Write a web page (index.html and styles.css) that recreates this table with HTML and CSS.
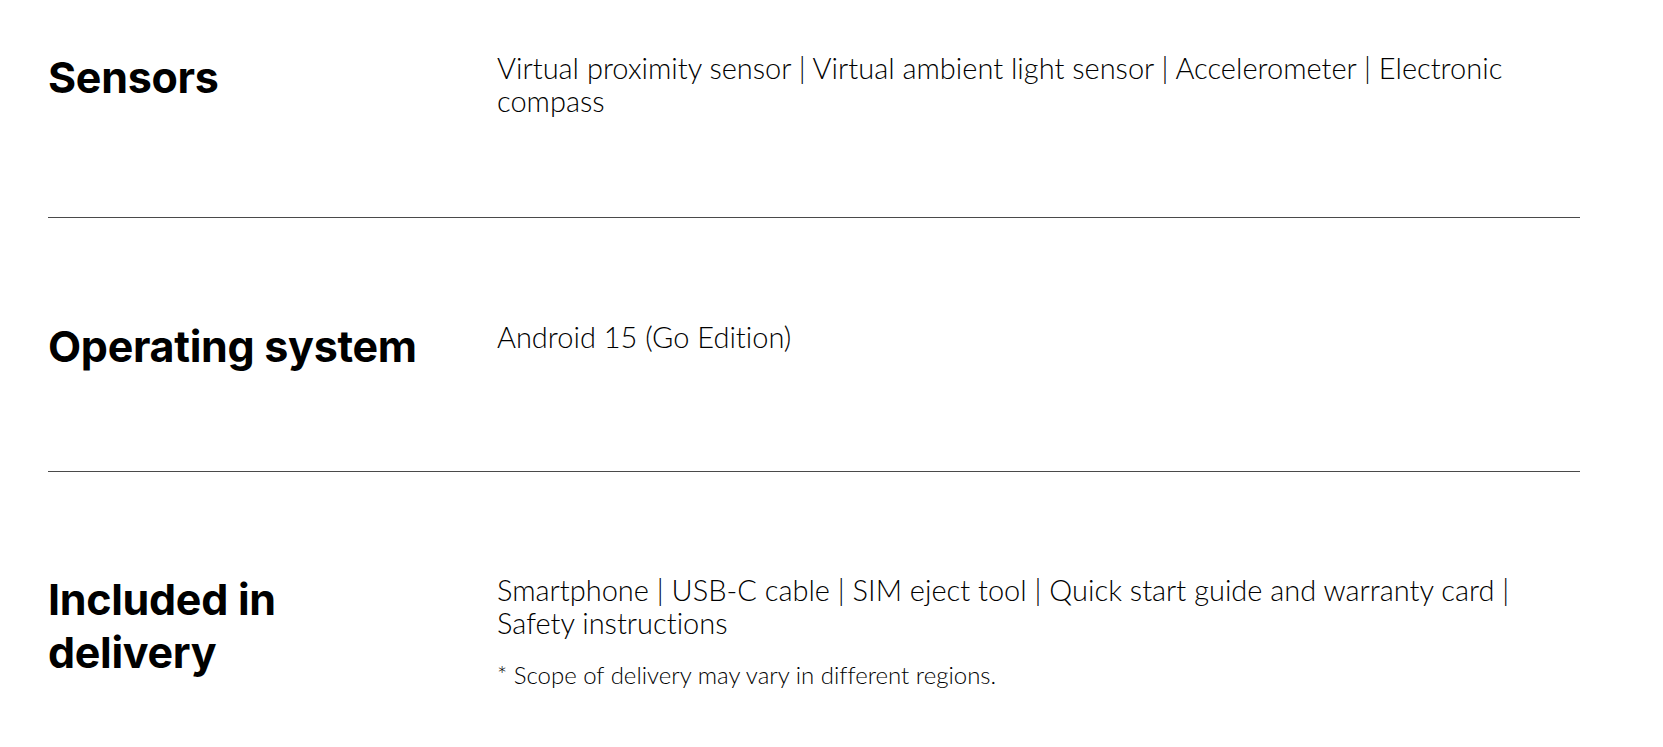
FILE: index.html
```html
<!DOCTYPE html>
<html lang="en">
<head>
<meta charset="utf-8">
<title>Specifications</title>
<link rel="stylesheet" href="styles.css">
</head>
<body>
<main class="specs">
  <section class="spec-row first">
    <h2 class="spec-title">Sensors</h2>
    <div class="spec-body">
      <p class="spec-text">Virtual proximity sensor | Virtual ambient light sensor | Accelerometer | Electronic compass</p>
    </div>
  </section>
  <section class="spec-row">
    <h2 class="spec-title">Operating system</h2>
    <div class="spec-body">
      <p class="spec-text">Android 15 (Go Edition)</p>
    </div>
  </section>
  <section class="spec-row last">
    <h2 class="spec-title">Included in delivery</h2>
    <div class="spec-body">
      <p class="spec-text">Smartphone | USB-C cable | SIM eject tool | Quick start guide and warranty card | Safety instructions</p>
      <p class="spec-note">* Scope of delivery may vary in different regions.</p>
    </div>
  </section>
</main>
</body>
</html>
```
FILE: styles.css
```css
html, body {
  margin: 0;
  padding: 0;
  background: #ffffff;
}

body {
  color: #000000;
  font-family: "Lato", "Liberation Sans", sans-serif;
}

.specs {
  width: 1532px;
  padding-left: 48px;
}

.spec-row {
  display: grid;
  grid-template-columns: 400px 1fr;
  column-gap: 49px;
  align-items: start;
  padding: 102px 0 98px;
  border-bottom: 1px solid #4a4a4a;
}

.spec-row.first {
  padding-top: 51px;
  padding-bottom: 100px;
}

.spec-row.last {
  padding-top: 101px;
  padding-bottom: 50px;
  border-bottom: none;
}

.spec-title {
  margin: 0;
  font-family: "Inter", "Liberation Sans", sans-serif;
  font-size: 43px;
  font-weight: 700;
  line-height: 53px;
  letter-spacing: -0.3px;
  color: #000000;
}

.spec-body {
  display: flex;
  flex-direction: column;
  gap: 21px;
}

.spec-text {
  margin: 0;
  font-family: "Lato", "Liberation Sans", sans-serif;
  font-size: 29px;
  font-weight: 300;
  line-height: 33px;
  font-variant-ligatures: none;
  color: #000000;
}

.spec-note {
  margin: 0;
  font-family: "Lato", "Liberation Sans", sans-serif;
  font-size: 24px;
  font-weight: 300;
  line-height: 30px;
  font-variant-ligatures: none;
  color: #000000;
}
```
